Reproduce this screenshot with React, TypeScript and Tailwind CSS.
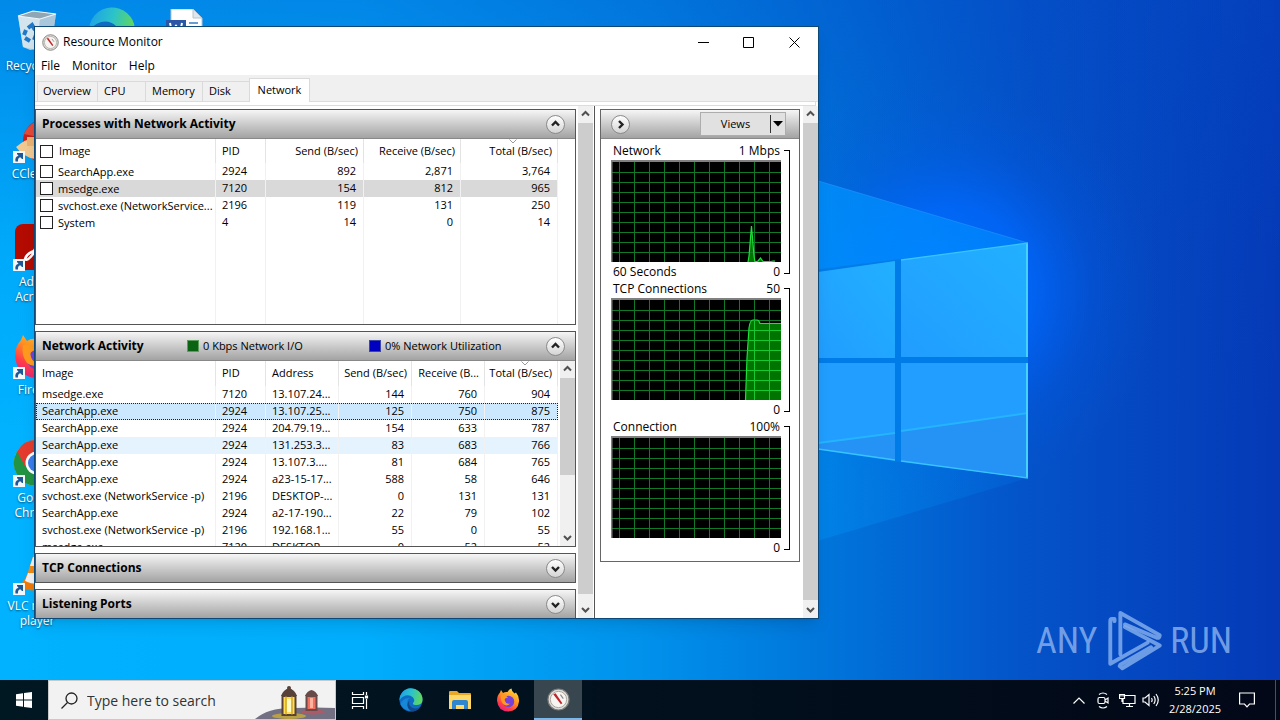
import type { ReactNode } from "react";

const UI_FONT = "font-['Open_Sans','Noto_Sans',sans-serif]";

/* ---------- wallpaper ---------- */

function Wallpaper() {
  return (
    <svg className="absolute inset-0 h-full w-full" viewBox="0 0 1280 720" preserveAspectRatio="xMidYMid slice" aria-hidden="true">
      <defs>
        <linearGradient id="base" x1="0" x2="1" y1="0" y2="0">
          <stop offset="0" stopColor="#00b2ff" />
          <stop offset="0.28" stopColor="#00aefd" />
          <stop offset="0.5" stopColor="#0092ec" />
          <stop offset="0.64" stopColor="#0076db" />
          <stop offset="0.8" stopColor="#0453c9" />
          <stop offset="1" stopColor="#0539b6" />
        </linearGradient>
        <linearGradient id="top" x1="0" x2="0" y1="0" y2="1">
          <stop offset="0" stopColor="#0348c4" stopOpacity="0.38" />
          <stop offset="0.35" stopColor="#0348c4" stopOpacity="0.08" />
          <stop offset="0.6" stopColor="#0348c4" stopOpacity="0" />
        </linearGradient>
        <radialGradient id="glow" gradientUnits="userSpaceOnUse" cx="950" cy="290" r="210">
          <stop offset="0" stopColor="#0070ff" stopOpacity="1" />
          <stop offset="0.4" stopColor="#0068ff" stopOpacity="0.75" />
          <stop offset="0.7" stopColor="#005cec" stopOpacity="0.25" />
          <stop offset="1" stopColor="#0058e0" stopOpacity="0" />
        </radialGradient>
        <linearGradient id="beam" x1="0" x2="1" y1="0" y2="0">
          <stop offset="0" stopColor="#0093ff" stopOpacity="0.9" />
          <stop offset="1" stopColor="#0093ff" stopOpacity="0.5" />
        </linearGradient>
        <linearGradient id="low" x1="0" x2="1" y1="0" y2="0">
          <stop offset="0" stopColor="#0093f0" stopOpacity="0.8" />
          <stop offset="1" stopColor="#0078e8" stopOpacity="0.2" />
        </linearGradient>
        <linearGradient id="pane" x1="0" x2="1" y1="1" y2="0">
          <stop offset="0" stopColor="#219dff" />
          <stop offset="1" stopColor="#22b0ff" />
        </linearGradient>
      </defs>
      <rect width="1280" height="720" fill="url(#base)" />
      <rect width="1280" height="720" fill="url(#top)" />
      <circle cx="950" cy="290" r="210" fill="url(#glow)" />
      <path d="M700 146L1028 243V360H700Z" fill="url(#beam)" />
      <path d="M700 360H1028V478L700 576Z" fill="url(#low)" />
      <path d="M700 146L1028 243" stroke="#2b9bff" strokeOpacity="0.5" fill="none" />
      <path d="M700 284L1028 243V478L700 437Z" fill="#007ce8" />
      <path d="M818 272L895 261V358H818Z" fill="url(#pane)" />
      <path d="M901 260L1028 243V357H901Z" fill="url(#pane)" />
      <path d="M818 363H895V460L818 449Z" fill="#219eff" />
      <path d="M901 363H1028V478L901 461Z" fill="#219eff" />
      <path d="M901 431L1028 413V478L901 461ZM818 443L895 433V460L818 449Z" fill="#2592f6" />
      <path d="M818 443L895 433M901 431L1028 413" stroke="#25b4ff" strokeWidth="2" fill="none" />
      <path d="M1027 243V357M1027 363V478" stroke="#45d2ff" strokeWidth="2" fill="none" />
      <path d="M901 260L1028 243M1028 478L901 461M895 460L818 449" stroke="#38c4ff" strokeWidth="1.300" fill="none" />
    </svg>
  );
}

function AnyRunMark() {
  return (
    <div className="absolute right-[48px] bottom-[8px] flex items-center gap-2 font-['Liberation_Sans_Narrow','Roboto_Condensed','Liberation_Sans',sans-serif] text-[36px] leading-none text-[#8fb5f0]/80">
      <span className="mr-[3px]">ANY</span>
      <svg width="54" height="62" viewBox="28 18 166 186" fill="none" stroke="#7fabec" strokeOpacity="0.85" strokeWidth="12" strokeLinejoin="round" strokeLinecap="round" aria-hidden="true">
        <path d="M48 50V43H40Q35 43 35 50V181L150 116" />
        <path d="M66 152V25L187 93Q187 103 178 101L80 60" />
        <path d="M80 68L187 125L72 195L64 188L66 184L160 130" />
      </svg>
      <span>RUN</span>
    </div>
  );
}

/* ---------- desktop icons ---------- */

function Shortcut() {
  return (
    <svg className="absolute bottom-0 left-0" width="12" height="12" viewBox="0 0 12 12" aria-hidden="true">
      <rect width="12" height="12" fill="#f4f7fa" />
      <path d="M2.500 10.500Q1.500 6 5.500 4.800L4 3V2H10V8H9L7.300 6.300Q4.500 7 5 10.500Z" fill="#1d5796" />
    </svg>
  );
}

function DesktopIcon({ label, art, shortcut = true }: { label: string; art: ReactNode; shortcut?: boolean }) {
  return (
    <a href="#desktop" className="flex h-[108px] w-[74px] flex-col items-center text-center text-xs leading-[15px] text-white [text-shadow:0_1px_2px_rgba(0,0,0,.55)]">
      <span className="relative mb-[3px] h-12 w-12 shrink-0">
        {art}
        {shortcut && <Shortcut />}
      </span>
      <span className="w-[64px]">{label}</span>
    </a>
  );
}

const recycleArt = (
  <svg width="48" height="48" viewBox="0 0 48 48" aria-hidden="true">
    <path d="M5 9L20 4L43 7L38 40L17 43L10 40Z" fill="#c9dbe8" fillOpacity=".85" />
    <path d="M5 9L27 12L24 43L10 40Z" fill="#dfe8ee" fillOpacity=".8" />
    <path d="M27 12L43 7L38 40L24 43Z" fill="#a9c3d6" fillOpacity=".8" />
    <path d="M5 9L20 4L43 7L27 12Z" fill="#8fa6b5" stroke="#eef5fa" strokeWidth="1.200" />
    <path d="M15 21L19 18L22 23M11 28L13 23M12 31L17 34M23 28L21 33" stroke="#1f78c8" strokeWidth="4" fill="none" />
  </svg>
);
const ccArt = (
  <svg width="48" height="48" viewBox="0 0 48 48" aria-hidden="true">
    <circle cx="32" cy="26" r="22" fill="#c8211c" />
    <path d="M11 19Q16 7 30 4L25 22Z" fill="#e34a3a" />
    <path d="M3 32Q14 22 24 24L30 32L22 44Q10 42 3 32Z" fill="#f0c890" />
    <path d="M14 22L26 22L26 31L14 31Z" fill="#e9b273" />
  </svg>
);
const adobeArt = (
  <svg width="48" height="48" viewBox="0 0 48 48" aria-hidden="true">
    <rect x="2" y="1" width="45" height="46" rx="8" fill="#b30b00" />
    <path d="M12 36Q13 31 21 28Q27 18 24 11Q27 9 27 16Q29 26 39 30Q31 28 20 31Q14 39 12 36Z" fill="none" stroke="#fff" strokeWidth="2.500" />
  </svg>
);
const chromeArt = (
  <svg width="48" height="48" viewBox="0 0 48 48" aria-hidden="true">
    <circle cx="24" cy="24" r="23" fill="#fbc116" />
    <path d="M24 24L4 12.500A23 23 0 0 0 24 47L34 30Z" fill="#229342" />
    <path d="M24 24L13 29L4 12.500A23 23 0 0 1 44 12.500H24Z" fill="#e33b2e" />
    <circle cx="24" cy="24" r="11.500" fill="#fff" />
    <circle cx="24" cy="24" r="9" fill="#3b7ded" />
  </svg>
);
const vlcArt = (
  <svg width="48" height="48" viewBox="0 0 48 48" aria-hidden="true">
    <path d="M8 38L14 28H36L42 38Q30 47 10 42Z" fill="#f07a08" />
    <path d="M22 3Q25 1 27 3L38 34Q24 42 12 34Z" fill="#f28a17" />
    <path d="M20 10H29L32 19H17ZM15 26H34L37 34Q24 40 12 34Z" fill="#f2f2f2" />
  </svg>
);

function FirefoxArt({ size }: { size: number }) {
  return (
    <svg width={size} height={size} viewBox="0 0 48 48" aria-hidden="true">
      <defs>
        <linearGradient id={`fx${size}`} x1="0.800" x2="0.200" y1="0" y2="1">
          <stop offset="0" stopColor="#ffe03a" />
          <stop offset="0.450" stopColor="#ff9022" />
          <stop offset="0.750" stopColor="#ff3c4a" />
          <stop offset="1" stopColor="#e01a86" />
        </linearGradient>
      </defs>
      <path d="M2 25Q2 15 8 9L10 4L14 10Q18 7 23 8Q27 1 31 1Q31 7 37 11L40 9Q47 17 46 27Q44 46 24 47Q4 46 2 25Z" fill={`url(#fx${size})`} />
      <circle cx="25" cy="27" r="11.500" fill="#7641d8" />
      <path d="M10 14Q18 12 24 19Q15 20 18 26Q20 33 28 31Q22 38 14 32Q8 24 10 14Z" fill="#ff9a1e" />
    </svg>
  );
}

function EdgeArt({ size }: { size: number }) {
  return (
    <svg width={size} height={size} viewBox="0 0 48 48" aria-hidden="true">
      <defs>
        <linearGradient id={`eg${size}`} x1="0" x2="1" y1="0.300" y2="0.500">
          <stop offset="0" stopColor="#1da1e8" />
          <stop offset="0.500" stopColor="#2cc3c9" />
          <stop offset="1" stopColor="#62d857" />
        </linearGradient>
      </defs>
      <circle cx="24" cy="24" r="23" fill="#0f6cc4" />
      <path d="M1 25A23 23 0 0 1 47 22Q48 33 36 34Q27 34 28 30Q33 25 28 19Q22 13 13 15Q4 18 1 25Z" fill={`url(#eg${size})`} />
      <path d="M17 26Q14 42 30 46Q10 47 3 33Q7 19 22 20Q17 22 17 26Z" fill="#1787d8" />
      <path d="M21 24Q17 37 31 41Q39 42 44 36Q36 50 22 45Q12 36 21 24Z" fill="#114a8b" />
    </svg>
  );
}

function DocArt() {
  return (
    <svg width="38" height="44" viewBox="0 0 38 44" aria-hidden="true">
      <path d="M6 0H28L37 9V44H6Z" fill="#fff" stroke="#b9c4cd" />
      <path d="M28 0V9H37Z" fill="#dfe7ee" stroke="#b9c4cd" />
      <rect x="1" y="11" width="20" height="20" fill="#2b57a4" />
      <path d="M5 14L8 28L11 16L14 28L17 14" stroke="#fff" strokeWidth="2" fill="none" />
      <path d="M24 14H33M24 18H33" stroke="#6b9bd4" strokeWidth="2" />
    </svg>
  );
}

function GaugeArt({ size }: { size: number }) {
  return (
    <svg width={size} height={size} viewBox="0 0 24 24" aria-hidden="true">
      <circle cx="12" cy="12" r="11" fill="#dcdcd8" stroke="#7c7c78" strokeWidth="1.200" />
      <circle cx="12" cy="12" r="8.500" fill="#f7f5f2" stroke="#a9a39c" />
      <path d="M6.500 6.500L9 5.500L16 16L14.500 17Z" fill="#c0242a" />
      <path d="M14 7L17 11" stroke="#888" strokeWidth="1.200" />
    </svg>
  );
}

/* ---------- window pieces ---------- */

type Dir = "up" | "down" | "right";
const chevrons: Record<Dir, string> = {
  up: "M3 7.500L6.500 4L10 7.500",
  down: "M3 5L6.500 8.500L10 5",
  right: "M5 3L8.500 6.500L5 10",
};

function Chevron({ dir, tone = "#222", width = 2.4 }: { dir: Dir; tone?: string; width?: number }) {
  return (
    <svg width="13" height="13" viewBox="0 0 13 13" fill="none" stroke={tone} strokeWidth={width} aria-hidden="true">
      <path d={chevrons[dir]} />
    </svg>
  );
}

function RoundButton({ dir, label }: { dir: Dir; label: string }) {
  return (
    <button aria-label={label} className="flex h-[19px] w-[19px] items-center justify-center rounded-full border border-[#8a8a8a] bg-gradient-to-b from-white to-[#d4d4d4]">
      <Chevron dir={dir} />
    </button>
  );
}

function ScrollBar({ thumb }: { thumb: string }) {
  return (
    <div className="flex w-[15px] shrink-0 flex-col bg-[#f0f0f0]">
      <button aria-label="Scroll up" className="flex h-[17px] shrink-0 items-center justify-center">
        <Chevron dir="up" tone="#505050" width={2} />
      </button>
      <div className="min-h-0 flex-1">
        <div className={`${thumb} bg-[#cdcdcd]`} />
      </div>
      <button aria-label="Scroll down" className="flex h-[17px] shrink-0 items-center justify-center">
        <Chevron dir="down" tone="#505050" width={2} />
      </button>
    </div>
  );
}

function Section({ title, open, legend, children }: { title: string; open?: boolean; legend?: ReactNode; children?: ReactNode }) {
  return (
    <section className="shrink-0 border border-[#555] bg-white">
      <header className={`${open ? "h-[29px] border-b" : "h-7"} relative flex items-center border-[#888] bg-gradient-to-b from-[#f6f6f6] to-[#a3a3a3] pr-[10px] pl-[6px]`}>
        <h2 className="flex-1 text-[12px] leading-4 font-bold">{title}</h2>
        {legend}
        <RoundButton dir={open ? "up" : "down"} label={`Toggle ${title}`} />
      </header>
      {children}
    </section>
  );
}

function SortMark() {
  return (
    <svg className="absolute top-0 left-1/2" width="8" height="5" viewBox="0 0 8 5" fill="none" stroke="#9a9a9a" aria-hidden="true">
      <path d="M0.500 0.500L4 4L7.500 0.500" />
    </svg>
  );
}

const th = "relative border-r border-[#e4e4e4] p-0 font-normal whitespace-nowrap";
const td = "truncate border-r border-[#f1f1f1] p-0";
const box = "h-[13px] w-[13px] shrink-0 appearance-none border border-[#222] bg-white";

const processes = [
  ["SearchApp.exe", "2924", "892", "2,871", "3,764"],
  ["msedge.exe", "7120", "154", "812", "965"],
  ["svchost.exe (NetworkService...", "2196", "119", "131", "250"],
  ["System", "4", "14", "0", "14"],
];

function ProcessTable() {
  return (
    <table className="w-[522px] table-fixed border-separate border-spacing-0 text-left text-[11px]">
      <colgroup>
        <col className="w-[180px]" />
        <col className="w-[50px]" />
        <col className="w-[98px]" />
        <col className="w-[97px]" />
        <col className="w-[97px]" />
      </colgroup>
      <thead>
        <tr className="h-6">
          <th className={th}>
            <label className="flex items-center gap-[6px] pl-1">
              <input type="checkbox" className={box} />
              Image
            </label>
          </th>
          <th className={`${th} pl-[6px]`}>PID</th>
          <th className={`${th} pr-[5px] text-right`}>Send (B/sec)</th>
          <th className={`${th} pr-[5px] text-right`}>Receive (B/sec)</th>
          <th className={`${th} pr-[5px] text-right`}>
            <SortMark />
            Total (B/sec)
          </th>
        </tr>
      </thead>
      <tbody>
        {processes.map((p, i) => (
          <tr key={p[0]} className={i === 1 ? "h-[17px] bg-[#d9d9d9]" : "h-[17px]"}>
            <td className={td}>
              <label className="flex items-center gap-[5px] pl-1 leading-[17px]">
                <input type="checkbox" className={box} />
                {p[0]}
              </label>
            </td>
            <td className={`${td} pl-[6px]`}>{p[1]}</td>
            <td className={`${td} pr-[7px] text-right`}>{p[2]}</td>
            <td className={`${td} pr-[7px] text-right`}>{p[3]}</td>
            <td className={`${td} pr-[7px] text-right`}>{p[4]}</td>
          </tr>
        ))}
        <tr className="h-[93px]">
          {processes[0].map((_, i) => (
            <td key={i} className={td} />
          ))}
        </tr>
      </tbody>
    </table>
  );
}

const activity = [
  ["msedge.exe", "7120", "13.107.24...", "144", "760", "904"],
  ["SearchApp.exe", "2924", "13.107.25...", "125", "750", "875"],
  ["SearchApp.exe", "2924", "204.79.19...", "154", "633", "787"],
  ["SearchApp.exe", "2924", "131.253.3...", "83", "683", "766"],
  ["SearchApp.exe", "2924", "13.107.3....", "81", "684", "765"],
  ["SearchApp.exe", "2924", "a23-15-17...", "588", "58", "646"],
  ["svchost.exe (NetworkService -p)", "2196", "DESKTOP-...", "0", "131", "131"],
  ["SearchApp.exe", "2924", "a2-17-190...", "22", "79", "102"],
  ["svchost.exe (NetworkService -p)", "2196", "192.168.1...", "55", "0", "55"],
  ["msedge.exe", "7120", "DESKTOP-...", "0", "52", "52"],
];

function rowTone(i: number) {
  if (i === 1) return "h-[17px] bg-[#cce8ff] outline-1 -outline-offset-1 outline-dotted outline-[#222]";
  if (i === 3) return "h-[17px] bg-[#e5f3ff]";
  return "h-[17px]";
}

function ActivityTable() {
  return (
    <div className="flex h-[185px] justify-between overflow-hidden">
      <table className="h-0 w-[522px] table-fixed border-separate border-spacing-0 text-left text-[11px]">
        <colgroup>
          <col className="w-[180px]" />
          <col className="w-[50px]" />
          <col className="w-[73px]" />
          <col className="w-[73px]" />
          <col className="w-[73px]" />
          <col className="w-[73px]" />
        </colgroup>
        <thead>
          <tr className="h-[25px]">
            <th className={`${th} pl-[6px]`}>Image</th>
            <th className={`${th} pl-[6px]`}>PID</th>
            <th className={`${th} pl-[6px]`}>Address</th>
            <th className={`${th} pr-1 text-right`}>Send (B/sec)</th>
            <th className={`${th} pr-[5px] text-right`}>Receive (B...</th>
            <th className={`${th} pr-[5px] text-right`}>
              <SortMark />
              Total (B/sec)
            </th>
          </tr>
        </thead>
        <tbody>
          {activity.map((a, i) => (
            <tr key={i} className={rowTone(i)}>
              <td className={`${td} pl-[6px]`}>{a[0]}</td>
              <td className={`${td} pl-[6px]`}>{a[1]}</td>
              <td className={`${td} overflow-hidden pl-[6px] text-clip`}>{a[2]}</td>
              <td className={`${td} pr-[7px] text-right`}>{a[3]}</td>
              <td className={`${td} pr-[7px] text-right`}>{a[4]}</td>
              <td className={`${td} pr-[7px] text-right`}>{a[5]}</td>
            </tr>
          ))}
        </tbody>
      </table>
      <ScrollBar thumb="h-[97px]" />
    </div>
  );
}

/* ---------- charts ---------- */

const gridX = [8, 23, 38, 53, 68, 83, 98, 113, 128, 143, 158];
const gridY = [12, 22, 32, 42, 52, 62, 72, 82, 92];

function Chart({ title, max, footer, line }: { title: string; max: string; footer?: string; line?: string }) {
  return (
    <figure className="flex h-[138px] gap-[2px] pr-[9px] pl-[10px] text-[12px] leading-[17px]">
      <div className="flex min-w-0 flex-1 flex-col">
        <figcaption className="flex justify-between pr-[2px] pl-[2px]">
          <span>{title}</span>
          <span>{max}</span>
        </figcaption>
        <svg className="my-px w-[170px] shrink-0 bg-black" height="102" viewBox="0 0 170 102" role="img" aria-label={title}>
          {line && <path d={`${line}V102Z`} fill="#007400" />}
          <g stroke="#107a27" strokeWidth="1">
            {gridX.map((x) => (
              <path key={x} d={`M${x + 0.5} 0V102`} />
            ))}
            {gridY.map((y) => (
              <path key={y} d={`M0 ${y + 0.5}H171`} />
            ))}
          </g>
          {line && <path d={line} fill="none" stroke="#1ee03a" strokeWidth="1.200" />}
          {line && footer === undefined && (
            <path d="M143.500 23V102M158.500 26V102M138 32.500H171M137 42.500H171M136 52.500H171M136 62.500H171M136 72.500H171M135 82.500H171M135 92.500H171" stroke="#18c832" />
          )}
          <path d="M0.500 102V1H171" fill="none" stroke="#808080" strokeWidth="2" />
        </svg>
        <div className="flex justify-between pr-[2px] pl-[2px]">
          <span>{footer}</span>
          <span>0</span>
        </div>
      </div>
      <div className="mt-2 mb-[6px] w-[6px] border-y border-r border-black" />
    </figure>
  );
}

/* ---------- resource monitor ---------- */

const tabs = [
  { name: "Overview", cls: "w-[60px] pl-[5px]" },
  { name: "CPU", cls: "w-[48px] pl-[6px]" },
  { name: "Memory", cls: "w-[57px] pl-[6px]" },
  { name: "Disk", cls: "w-[47px] pl-[6px]" },
];

function ResourceMonitor() {
  return (
    <main className="absolute top-[26px] left-[34px] flex h-[593px] w-[785px] flex-col overflow-hidden border border-[#0d4877] bg-white text-[12px] text-black shadow-lg">
      <div className="flex h-[30px] shrink-0 items-center pl-[7px]">
        <GaugeArt size={17} />
        <h1 className="flex-1 pl-1 text-[12px] font-normal">Resource Monitor</h1>
        <button aria-label="Minimize" className="flex h-full w-[46px] items-center justify-center">
          <svg width="11" height="11" viewBox="0 0 11 11" stroke="#000"><path d="M0 5.500H11" /></svg>
        </button>
        <button aria-label="Maximize" className="flex h-full w-[45px] items-center justify-center">
          <svg width="11" height="11" viewBox="0 0 11 11" fill="none" stroke="#000"><path d="M0.500 0.500H10.500V10.500H0.500Z" /></svg>
        </button>
        <button aria-label="Close" className="flex h-full w-[47px] items-center justify-center">
          <svg width="11" height="11" viewBox="0 0 11 11" stroke="#000"><path d="M0.500 0.500L10.500 10.500M10.500 0.500L0.500 10.500" /></svg>
        </button>
      </div>
      <nav className="flex h-[18px] shrink-0 items-center gap-3 pl-[6px]">
        <button>File</button>
        <button>Monitor</button>
        <button>Help</button>
      </nav>
      <div className="shrink-0 bg-[#f0f0f0]">
        <div role="tablist" className="flex h-[27px] items-end border-b border-[#dcdcdc] pl-[2px] text-[11px]">
          {tabs.map((t) => (
            <button key={t.name} role="tab" className={`${t.cls} h-[20px] border-t border-l border-[#dadada] text-left`}>
              {t.name}
            </button>
          ))}
          <button role="tab" aria-selected="true" className="-mb-px h-[24px] w-[61px] border border-b-0 border-[#dadada] bg-white">
            Network
          </button>
        </div>
      </div>
      <div className="mr-[2px] h-1 shrink-0 border-r border-b border-[#dcdcdc]" />

      <div className="flex min-h-0 flex-1">
        <div className="mt-[3px] flex min-w-0 flex-1 flex-col gap-[6px] overflow-hidden">
          <Section title="Processes with Network Activity" open>
            <ProcessTable />
          </Section>
          <Section
            title="Network Activity"
            open
            legend={
              <div className="absolute left-[151px] flex text-[11px]">
                <span className="flex w-[182px] items-center gap-1">
                  <i className="h-3 w-3 border border-[#5d9c5d] bg-[#0a6414]" />0 Kbps Network I/O
                </span>
                <span className="flex items-center gap-1">
                  <i className="h-3 w-3 border border-[#3c46a8] bg-[#0000c0]" />0% Network Utilization
                </span>
              </div>
            }
          >
            <ActivityTable />
          </Section>
          <Section title="TCP Connections" />
          <Section title="Listening Ports" />
        </div>
        <div className="ml-[2px] flex"><ScrollBar thumb="h-[471px]" /></div>
        <div className="ml-px flex w-[224px] shrink-0 justify-between border-l border-[#555]">
          <div className="mt-[3px] ml-[5px] h-[453px] w-[200px] border border-[#666]">
            <div className="flex h-[29px] items-center justify-between border-b border-[#888] bg-gradient-to-b from-[#f6f6f6] to-[#a3a3a3] pr-[13px] pl-[10px]">
              <RoundButton dir="right" label="Hide charts" />
              <button className="flex h-[24px] w-[86px] items-center border border-[#adadad] bg-[#e1e1e1] text-[11px]">
                <span className="flex-1">Views</span>
                <span className="flex h-[18px] items-center border-l border-[#333] px-[2px]">
                  <svg width="10" height="6" viewBox="0 0 10 6" aria-hidden="true"><path d="M0 0H10L5 5.500Z" /></svg>
                </span>
              </button>
            </div>
            <div className="pt-[3px]">
              <Chart title="Network" max="1 Mbps" footer="60 Seconds" line="M137 102L138 96L140.500 66L143 96L144 102L147 101L149.500 98L152 101.500H160L162 101H164" />
              <Chart title="TCP Connections" max="50" line="M134.500 102L136 60L138 30Q139 22 142 22H146Q148 22 149 25.500H171" />
              <Chart title="Connection" max="100%" />
            </div>
          </div>
          <ScrollBar thumb="h-[477px]" />
        </div>
      </div>
    </main>
  );
}

/* ---------- taskbar ---------- */

function Lanterns() {
  return (
    <svg width="80" height="38" viewBox="0 0 80 38" aria-hidden="true">
      <path d="M0 38Q14 26 40 27Q60 26 80 27V38Z" fill="#737083" />
      <ellipse cx="34" cy="35" rx="17" ry="3" fill="#c9ae35" opacity=".8" />
      <ellipse cx="58" cy="31" rx="12" ry="2.500" fill="#b95560" opacity=".8" />
      <path d="M26 15Q28 9 34 7Q40 9 42 15Z" fill="#574138" />
      <circle cx="34" cy="7" r="2" fill="#574138" />
      <rect x="27.500" y="15" width="13" height="19" fill="#ffdf4d" stroke="#574138" strokeWidth="2" />
      <path d="M31 15V34M37 15V34" stroke="#b98c28" />
      <path d="M34 18V31" stroke="#fff9c4" strokeWidth="4" />
      <path d="M50 15Q52 10 56.500 9Q61 10 63 15Z" fill="#6a4a48" />
      <rect x="51.500" y="15" width="10" height="14" fill="#ef6f60" stroke="#6a4a48" strokeWidth="2" />
      <path d="M56.500 17V27" stroke="#ffb39e" strokeWidth="3" />
    </svg>
  );
}

const taskBtn = "flex h-full items-center justify-center";

function Taskbar() {
  return (
    <footer className="relative flex h-10 shrink-0 items-center bg-gradient-to-r from-[#001822] to-[#020817] text-white">
      <button aria-label="Start" className={`${taskBtn} w-12`}>
        <svg width="16" height="16" viewBox="0 0 16 16" fill="#fff"><path d="M0 2.200L7 1.200V7.500H0ZM8 1L16 0V7.500H8ZM0 8.500H7V14.800L0 13.800ZM8 8.500H16V16L8 15Z" /></svg>
      </button>
      <div className="flex h-full w-[288px] items-center border border-[#c9c9c9] bg-[#f2f2f2] pl-3 text-[#222]">
        <svg width="17" height="17" viewBox="0 0 17 17" fill="none" stroke="#222" strokeWidth="1.300" aria-hidden="true">
          <circle cx="10.500" cy="6.500" r="5.500" />
          <path d="M6.500 10.500L0.500 16.500" />
        </svg>
        <input aria-label="Type here to search" placeholder="Type here to search" className="ml-[9px] w-0 flex-1 bg-transparent text-[14px] outline-none placeholder:text-[#333]" />
        <Lanterns />
      </div>
      <button aria-label="Task View" className={`${taskBtn} w-12`}>
        <svg width="18" height="17" viewBox="0 0 18 17" fill="none" stroke="#fff" strokeWidth="1.200"><path d="M1.500 0V2.500H12.500V0M1.500 5.500H12.500V11.500H1.500ZM1.500 17V14.500H12.500V17M15.500 0V3M15.500 7V17" /><path d="M14.500 4H16.500V6H14.500Z" fill="#fff" /></svg>
      </button>
      <button aria-label="Microsoft Edge" className={`${taskBtn} w-[54px]`}><EdgeArt size={24} /></button>
      <button aria-label="File Explorer" className={`${taskBtn} w-11`}>
        <svg width="22" height="20" viewBox="0 0 22 20"><path d="M0 2Q0 1 1 1H8L10 3H21Q22 3 22 4V18H0Z" fill="#e9a926" /><path d="M0 5H22V19H0Z" fill="#ffd868" /><path d="M3 12Q3 10 5 10H17Q19 10 19 12V19H15V15H7V19H3Z" fill="#2f86cf" /></svg>
      </button>
      <button aria-label="Firefox" className={`${taskBtn} w-[52px]`}><FirefoxArt size={24} /></button>
      <button aria-label="Resource Monitor" className={`${taskBtn} w-12 border-b-2 border-[#76b9ed] bg-[#37464f]`}><GaugeArt size={23} /></button>
      <div className="flex-1" />
      <button aria-label="Show hidden icons" className={`${taskBtn} w-6`}>
        <svg width="12" height="7" viewBox="0 0 12 7" fill="none" stroke="#fff" strokeWidth="1.200"><path d="M0.500 6.500L6 1L11.500 6.500" /></svg>
      </button>
      <button aria-label="Meet Now" className={`${taskBtn} w-6`}>
        <svg width="12" height="17" viewBox="0 0 12 17" fill="none" stroke="#fff" strokeWidth="1.200"><path d="M2 2.500Q6 -0.500 10 2.500M2 14.500Q6 17.500 10 14.500M2.500 5.500H6.500Q8 5.500 8 7V10Q8 11.500 6.500 11.500H2.500Q1 11.500 1 10V7Q1 5.500 2.500 5.500ZM8 8L11 6V11L8 9" /></svg>
      </button>
      <button aria-label="Network" className={`${taskBtn} w-6`}>
        <svg width="17" height="15" viewBox="0 0 17 15" fill="none" stroke="#fff" strokeWidth="1.200"><path d="M6 2.500H16V10.500H4V6M7 13.500H14M10.500 10.500V13.500M0.500 1.500H5.500V5.500H0.500ZM2 1.500V3.500M4 1.500V3.500M3 5.500V9" /></svg>
      </button>
      <button aria-label="Volume" className={`${taskBtn} w-6`}>
        <svg width="18" height="14" viewBox="0 0 18 14" fill="none" stroke="#fff" strokeWidth="1.200"><path d="M1 5H3L7 1.500V12.500L3 9H1ZM9.500 5Q10.800 7 9.500 9M11.800 3Q14.500 7 11.800 11M14 1Q18.500 7 14 13" /></svg>
      </button>
      <div className="w-[64px] text-center text-[11px] leading-[18px]">
        <div>5:25 PM</div>
        <div>2/28/2025</div>
      </div>
      <button aria-label="Notifications" className={`${taskBtn} mr-2 w-10`}>
        <svg width="16" height="16" viewBox="0 0 16 16" fill="none" stroke="#fff" strokeWidth="1.200"><path d="M0.600 1H15.400V12H10.500L8 14.800L5.500 12H0.600Z" /></svg>
      </button>
      <div className="mr-1 h-full w-px bg-[#4a5260]" />
    </footer>
  );
}

export default function App() {
  return (
    <div className={`relative flex h-screen w-full flex-col overflow-hidden ${UI_FONT}`}>
      <Wallpaper />
      <div className="relative min-h-0 flex-1 overflow-hidden">
        <div className="absolute top-[7px] left-0 flex">
          <nav aria-label="Desktop" className="flex flex-col">
            <DesktopIcon label="Recycle Bin" art={recycleArt} shortcut={false} />
            <DesktopIcon label="CCleaner" art={ccArt} />
            <DesktopIcon label="Adobe Acrobat" art={adobeArt} />
            <DesktopIcon label="Firefox" art={<FirefoxArt size={48} />} />
            <DesktopIcon label="Google Chrome" art={chromeArt} />
            <DesktopIcon label="VLC media player" art={vlcArt} />
          </nav>
          <span className="ml-[14px]"><EdgeArt size={48} /></span>
          <span className="mt-[2px] ml-[29px]"><DocArt /></span>
        </div>
        <ResourceMonitor />
        <AnyRunMark />
      </div>
      <Taskbar />
    </div>
  );
}
